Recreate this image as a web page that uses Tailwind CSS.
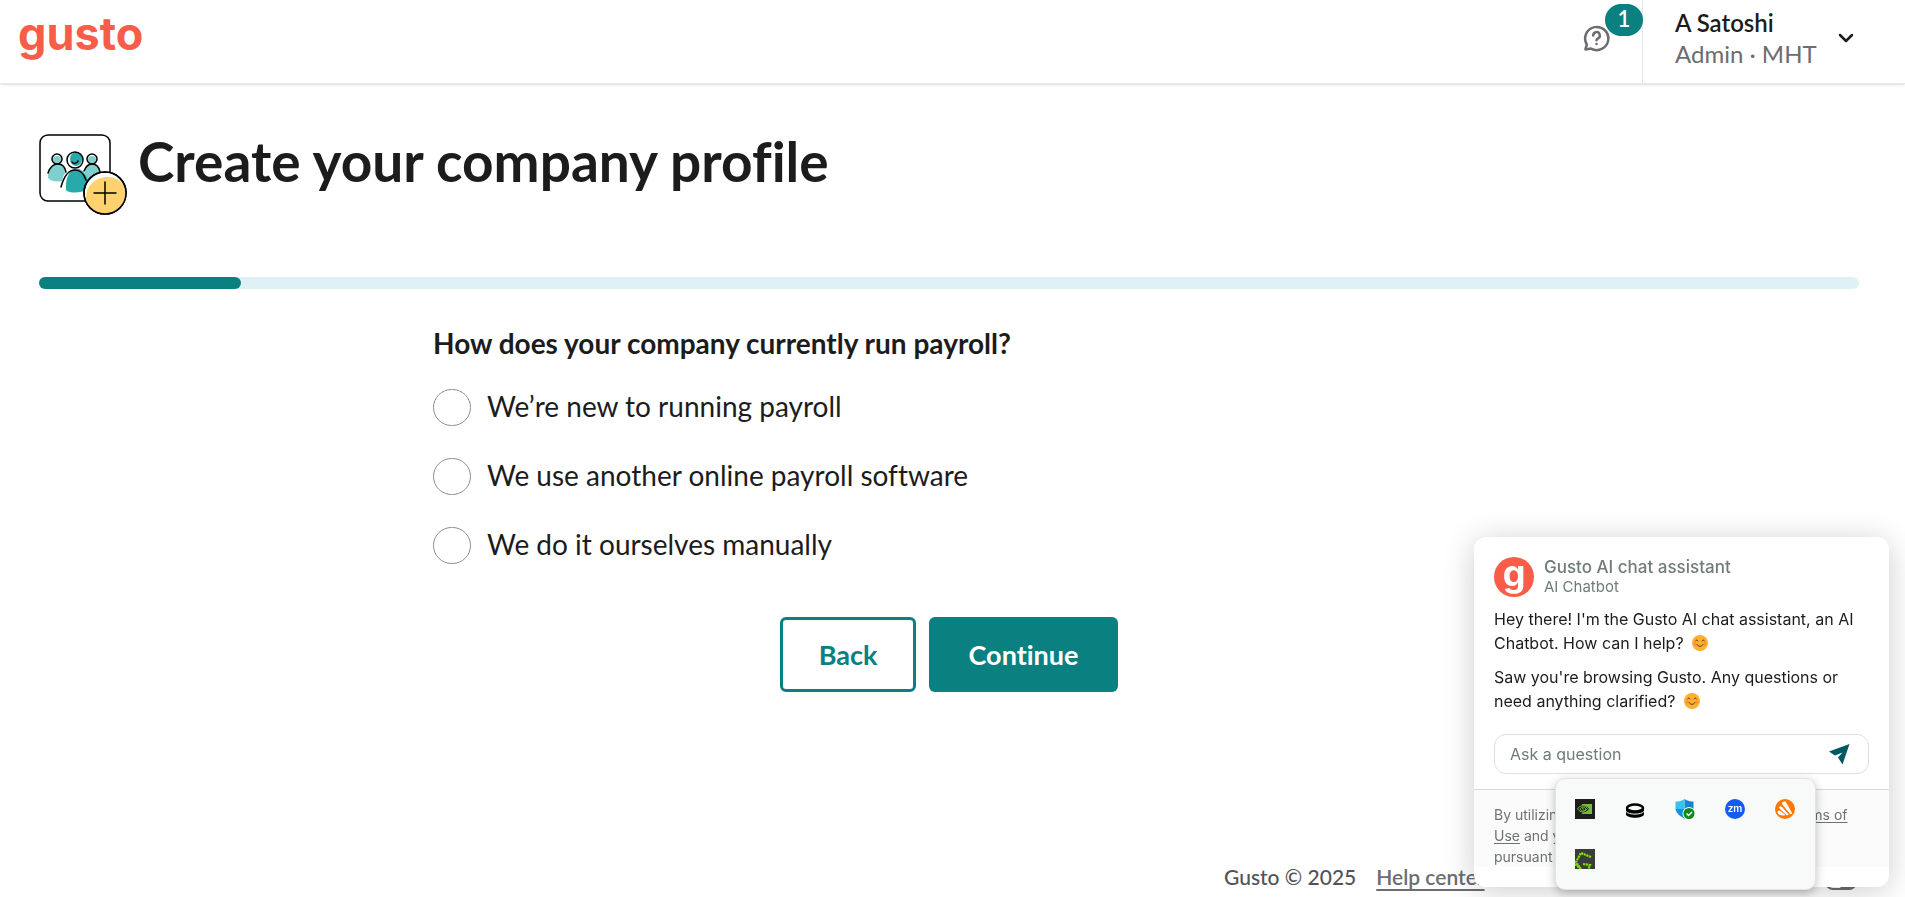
<!DOCTYPE html>
<html lang="en">
<head>
  <meta charset="UTF-8" />
  <meta name="viewport" content="width=device-width,initial-scale=1" />
  <title>Create your company profile • Gusto</title>
  <script src="https://cdn.jsdelivr.net/npm/@tailwindcss/browser@4"></script>
</head>
<body class="relative flex flex-col min-h-screen overflow-hidden bg-white text-[#1c1c1c] font-[Lato,sans-serif] [font-variant-ligatures:none]">
  <header class="flex items-stretch justify-between h-21 border-b border-[#e8e8e8] shadow-sm">
    <a href="#" class="pl-[18px] pt-1 text-[45px] leading-[60px] font-bold text-[#f75d48] font-[Inter,sans-serif]">gusto</a>
    <div class="flex">
      <button type="button" aria-label="Help, 1 notification" class="relative w-16 border-r border-[#e4e4e6]">
        <svg class="absolute left-1 top-6" width="27" height="28" viewBox="0 0 27 28" fill="none" stroke="#6c6c72" stroke-width="2.5" stroke-linecap="round" stroke-linejoin="round">
          <path d="M3.8 20.5A11.6 11.6 0 1 1 8 24.6L2.4 25.4Z" />
          <path d="M10.2 11.4a3.3 3.3 0 1 1 4.9 2.9c-1.1.6-1.6 1-1.6 1.9" />
          <path d="M13.5 20v.1" />
        </svg>
        <span class="absolute -right-px top-1 w-[38px] h-8 rounded-2xl bg-[#0a8080] text-white text-[22px] leading-[30px] font-semibold text-center">1</span>
      </button>
      <button type="button" class="flex items-center gap-5 pl-8 pr-[51px] pb-2 text-left">
        <span class="flex flex-col w-[143px] text-2xl leading-[31px] whitespace-nowrap">
          <span class="font-semibold">A Satoshi</span>
          <span class="text-[#6c6c72]">Admin · MHT</span>
        </span>
        <svg width="16" height="10" viewBox="0 0 16 10" fill="none" stroke="#1c1c1c" stroke-width="2.5" stroke-linecap="round" stroke-linejoin="round"><path d="M2 2l6 6 6-6" /></svg>
      </button>
    </div>
  </header>

  <main class="pl-[39px] pr-[46px] pt-12">
    <div class="flex items-start gap-[10px]">
      <svg width="89" height="84" viewBox="0 0 89 84" fill="none" stroke="#000" stroke-width="1.5" stroke-linecap="round">
        <rect x="1" y="3" width="70" height="66" rx="8" />
        <g fill="#80cfcf" stroke="none">
          <path d="M9 46c0-9 4-15 10-15 5 0 8 4 8 10-3 2-3 5-4 8-5 1-10 1-14-3Z" />
          <path d="M45 38c2-5 5-7 8-7 6 0 9 5 9 11l-14 6c-1-4-2-7-3-10Z" />
          <circle cx="18" cy="28" r="4" /><circle cx="53" cy="28" r="4" />
        </g>
        <path d="M27 58c-1-11 3-21 11-21 7 0 11 8 13 20-8 4-20 5-24 1Z" fill="#2aa9ab" stroke="none" />
        <ellipse cx="37" cy="27" rx="6" ry="7" fill="#2aa9ab" stroke="none" />
        <circle cx="18" cy="27" r="5" /><circle cx="53" cy="27" r="5" /><circle cx="36" cy="28" r="8" />
        <path d="M9 41c2-6 5-9 10-9 4 0 7 3 8 8M45 39c2-5 5-7 8-7 4 0 7 3 8 8M22 55c3-11 7-17 14-17 6 0 9 4 11 10M33 30c1 2 5 2 6-1" />
        <circle cx="66" cy="61" r="21" fill="#fff" />
        <path d="M47 66c0-12 9-21 22-21 10 0 18 7 18 17 0 11-9 20-20 20-10 0-20-6-20-16Z" fill="#ffd270" stroke="none" />
        <circle cx="66" cy="61" r="21" />
        <path d="M55 61h22M66 50v22" />
      </svg>
      <h1 class="text-[55px] leading-[58px] font-bold">Create your company profile</h1>
    </div>

    <div role="progressbar" aria-label="Company profile progress" aria-valuenow="1" aria-valuemax="9" class="mt-[61px] h-3 rounded-full bg-[#e0f1f6]">
      <div class="h-3 w-1/9 rounded-full bg-[#0a8080]"></div>
    </div>

    <form class="max-w-[1032px] mx-auto pt-9">
      <fieldset>
        <legend class="text-[28px] leading-9 font-bold">How does your company currently run payroll?</legend>
        <div class="flex flex-col gap-8 pt-7 text-[28px] leading-[34px]">
          <label class="flex gap-4"><input type="radio" name="payroll" class="appearance-none shrink-0 w-[38px] h-[37px] rounded-full border border-[#8f8f94]" />We’re new to running payroll</label>
          <label class="flex gap-4"><input type="radio" name="payroll" class="appearance-none shrink-0 w-[38px] h-[37px] rounded-full border border-[#8f8f94]" />We use another online payroll software</label>
          <label class="flex gap-4"><input type="radio" name="payroll" class="appearance-none shrink-0 w-[38px] h-[37px] rounded-full border border-[#8f8f94]" />We do it ourselves manually</label>
        </div>
      </fieldset>
      <div class="flex justify-center gap-[13px] pt-[53px] text-[27px] leading-8 font-bold">
        <button type="button" class="w-34 h-[75px] rounded-md border-3 border-[#0a8080] text-[#0a8080]">Back</button>
        <button type="submit" class="w-[189px] h-[75px] rounded-md bg-[#0a8080] text-white">Continue</button>
      </div>
    </form>
  </main>

  <footer class="flex items-center gap-5 ml-auto mt-auto mr-12 mb-1 w-[633px] h-8 text-[21px] font-medium whitespace-nowrap text-[#525257]">
    <span>Gusto © 2025</span>
    <a href="#" class="font-semibold text-[#6c6c72] underline underline-offset-4">Help center</a>
    <svg class="ml-auto self-end mb-[3px]" width="32" height="16" viewBox="0 0 32 16"><rect x="1" y="1" width="30" height="14" rx="7" fill="#fff" stroke="#6c6c72" stroke-width="2" /><path d="M19 1h5a7 7 0 0 1 0 14h-9Z" fill="#6c6c72" /></svg>
  </footer>

  <!-- Chat assistant -->
  <aside class="fixed right-4 bottom-[10px] w-[415px] rounded-xl bg-white shadow-[0_4px_32px_rgba(0,0,0,0.2)] font-[Inter,sans-serif]">
    <div class="px-5 pt-5 pb-[15px]">
      <div class="flex items-center gap-[10px] text-[#6f7c79]">
        <div class="size-10 rounded-full bg-[#f75d48] text-white text-4xl leading-8 font-bold text-center">g</div>
        <div>
          <h2 class="text-[17px] leading-5 font-medium">Gusto AI chat assistant</h2>
          <p class="text-[15px] leading-5">AI Chatbot</p>
        </div>
      </div>
      <div class="flex flex-col gap-[10px] pt-[10px] text-[16px] leading-6 whitespace-nowrap">
        <p>Hey there! I'm the Gusto AI chat assistant, an AI<br />Chatbot. How can I help?
          <svg class="inline ml-1 mb-1" width="16" height="16" viewBox="0 0 16 16" fill="none" stroke="#5d3c24" stroke-linecap="round"><circle cx="8" cy="8" r="8" fill="#ffb02e" stroke="none" /><circle cx="3" cy="9" r="1.6" fill="#ff8a45" stroke="none" /><circle cx="13" cy="9" r="1.6" fill="#ff8a45" stroke="none" /><path d="M3.5 6c.5-1.4 2-1.4 2.5 0M10 6c.5-1.4 2-1.4 2.5 0M5 9.500c1 2.500 5 2.500 6 0" /></svg></p>
        <p>Saw you're browsing Gusto. Any questions or<br />need anything clarified?
          <svg class="inline ml-1 mb-1" width="16" height="16" viewBox="0 0 16 16" fill="none" stroke="#5d3c24" stroke-linecap="round"><circle cx="8" cy="8" r="8" fill="#ffb02e" stroke="none" /><circle cx="3" cy="9" r="1.6" fill="#ff8a45" stroke="none" /><circle cx="13" cy="9" r="1.6" fill="#ff8a45" stroke="none" /><path d="M3.5 6c.5-1.4 2-1.4 2.5 0M10 6c.5-1.4 2-1.4 2.5 0M5 9.500c1 2.500 5 2.500 6 0" /></svg></p>
      </div>
      <form class="flex items-center mt-[21px] h-10 rounded-xl border border-[#dedfe4] pl-[15px] pr-[18px]">
        <input type="text" aria-label="Ask a question" placeholder="Ask a question" class="grow text-[16px] outline-none placeholder:text-[#6f7c79]" />
        <button type="submit" aria-label="Send">
          <svg width="21" height="21" viewBox="0 0 21 21"><path d="M20.500 0L0 7.500l6 4L13.500 8.500 9 13.500l4.500 7Z" fill="#005961" /></svg>
        </button>
      </form>
    </div>
    <p class="h-[78px] border-t border-[#d9d9dc] bg-[#fbfbfb] px-5 pt-[14px] mb-5 text-[14px] leading-[21px] whitespace-nowrap text-[#6b7371]">By utilizing this chat, you agree to the Gusto <a href="#" class="underline underline-offset-2">Terms of<br />Use</a> and your chat may be recorded and used<br />pursuant to them.</p>
  </aside>

  <!-- System tray flyout -->
  <div class="fixed right-[89px] bottom-[7px] flex flex-wrap gap-[30px] h-28 w-[261px] content-start rounded-[10px] border border-[#e3e3e3] bg-[#f8f9f9] px-[19px] pt-5 shadow-[0_3px_10px_rgba(0,0,0,0.25)]">
    <svg width="20" height="20" viewBox="0 0 20 20" fill="none"><path fill="#1d1d1d" d="M0 0h20v20H0z" /><path fill="#76b93f" d="M7 5h10v10H7z" /><path fill="#1d1d1d" d="M7 6.500c4 0 6 2 7 3.500-2 2.500-4 3.500-7 3.500Z" /><path d="M2.500 10C5 5.500 10 6 12.500 9.500 9 14 5.500 13.500 2.500 10ZM5 10c1.500-3 4.500-2 6 0-2 2.500-4.500 2.500-6 0ZM7 9l2 1.500" stroke="#76b93f" /></svg>
    <svg width="20" height="20" viewBox="0 0 20 20"><path d="M1 9h18v6c0 5-18 5-18 0Z" fill="#000" /><ellipse cx="10" cy="9" rx="8" ry="3.500" fill="#f8f9f9" stroke="#000" stroke-width="2.500" /><path d="M1 12.500c3 3.500 15 3.500 18 0" fill="none" stroke="#f8f9f9" /></svg>
    <svg width="20" height="20" viewBox="0 0 20 20"><path d="M9.500 0c3 2 6 2.500 9 2.500V9c0 5-4 8-9 10.500Z" fill="#1683d8" /><path d="M9.500 0C7 2 4 2.500.5 2.500V10h9Z" fill="#35c1f1" /><path d="M.5 10c.5 4 4 7 9 9.500V10Z" fill="#1490df" /><path d="M9.500 10h9c0 4-4 7-9 9.500Z" fill="#0f5cb5" /><circle cx="14" cy="14.500" r="6.500" fill="#f8f9f9" /><circle cx="14" cy="14.500" r="5.500" fill="#0c8a18" /><path d="M11.500 14.500l2 2 3.500-3.500" fill="none" stroke="#fff" stroke-width="1.500" /></svg>
    <svg width="20" height="20" viewBox="0 0 20 20"><circle cx="10" cy="10" r="10" fill="#145bf0" /><text x="10" y="13" text-anchor="middle" font-family="Inter, sans-serif" font-size="10" font-weight="600" fill="#fff">zm</text></svg>
    <svg width="20" height="20" viewBox="0 0 20 20"><circle cx="10" cy="10" r="10" fill="#ff7800" /><g fill="#fff"><path d="M7 5c0-3 3.500-3 4.500-1L17 14c0 1-1 1.500-2 1Z" /><path d="M4 9c.5-2 2-2 3-1l6.500 7.500c0 1-1 1-2 .5Z" /><path d="M2.500 13c.5-1.500 1.500-1.500 3-1l4.500 3.500c0 1-1 1-2 1-3 0-5-1-5.500-3.500Z" /></g></svg>
    <svg width="20" height="20" viewBox="0 0 20 20"><path fill="#3b3b3b" d="M0 0h20v20H0z" /><path d="M16 8L6 4 1 13l5 7M8 15l7 1-1.500 4M0 15l6 5" fill="none" stroke="#7de00b" stroke-width="2.200" stroke-dasharray="2.200 .6" /></svg>
  </div>
</body>
</html>
